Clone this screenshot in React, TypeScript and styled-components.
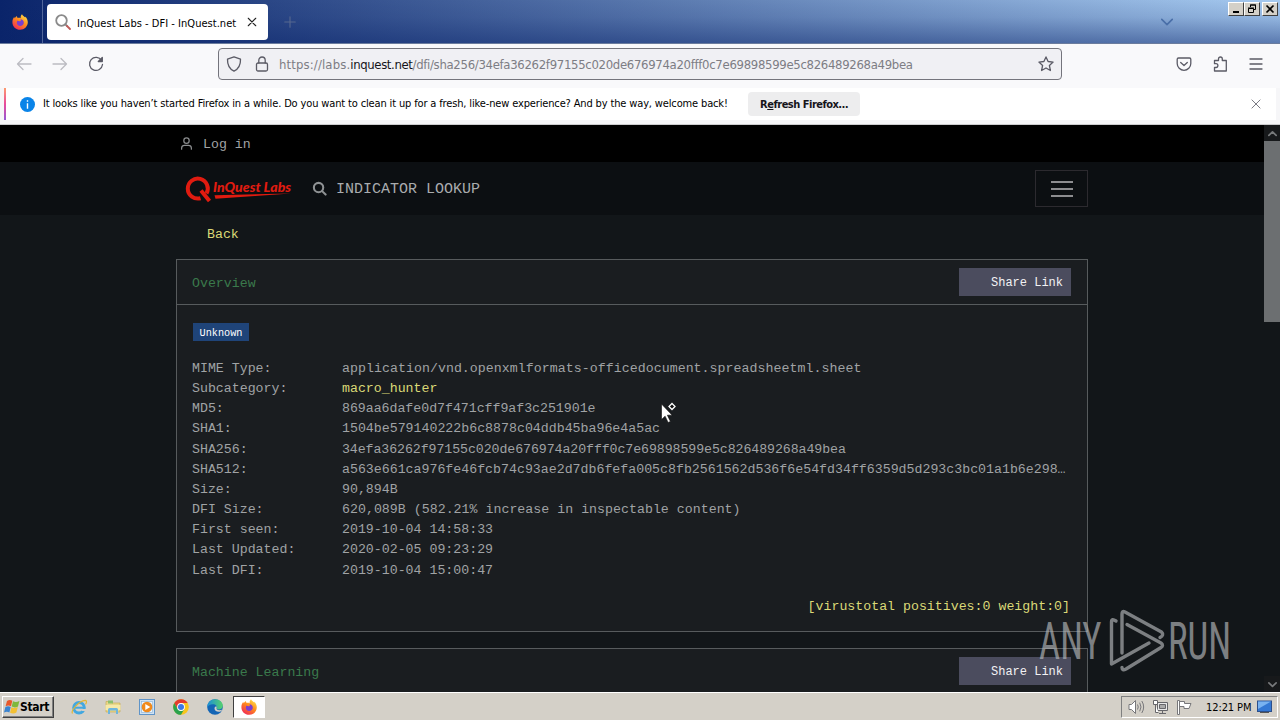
import { ReactNode } from 'react';
import styled, { createGlobalStyle, css } from 'styled-components';

const GlobalStyle = createGlobalStyle`
  * {
    box-sizing: border-box;
  }

  body {
    margin: 0;
    overflow: hidden;
  }
`;

const ui = `'DejaVu Sans Condensed', 'DejaVu Sans', sans-serif`;
const mono = `'Liberation Mono', monospace`;

const Screen = styled.div`
  position: relative;
  display: flex;
  flex-direction: column;
  width: 1280px;
  height: 720px;
  overflow: hidden;
  font-family: ${ui};
  font-stretch: condensed;
  font-size: 11px;
  color: #15141a;

  svg {
    display: block;
    flex: none;
  }
`;

/* ---------- browser chrome ---------- */

const TitleBar = styled.div`
  display: flex;
  height: 44px;
  flex: none;
  border-bottom: 1px solid #6b7c9d;
  background: linear-gradient(180deg, rgba(255, 255, 255, 0) 0, rgba(10, 36, 106, 0.12) 40%, rgba(10, 36, 106, 0.48) 100%),
    linear-gradient(90deg, #0a246a 0, #a6caf0 100%);
`;

const PinnedArea = styled.div`
  display: flex;
  align-items: center;
  justify-content: center;
  width: 43px;
  padding-right: 3px;
  border-right: 1px solid #51669b;
`;

const Tab = styled.div`
  display: flex;
  align-items: center;
  width: 221px;
  height: 36px;
  margin: 4px 0 0 4px;
  padding: 0 11px 0 8px;
  border-radius: 4px;
  background: #fff;
`;

const TabTitle = styled.span`
  width: 162px;
  margin: 3px 9px 0 6px;
  color: #000;
  letter-spacing: 0.03px;
  white-space: nowrap;
`;

const NewTab = styled.div`
  display: flex;
  align-items: center;
  margin-left: 16px;
  flex: 1;
`;

const ListTabs = styled.div`
  display: flex;
  align-items: center;
  margin-right: 55px;
`;

const WindowButtons = styled.div`
  display: flex;
  padding: 2px 2px 0 0;
`;

const WindowButton = styled.div<{ $gap?: boolean }>`
  display: flex;
  align-items: center;
  justify-content: center;
  width: 16px;
  height: 14px;
  margin-left: ${(p) => (p.$gap ? 2 : 0)}px;
  border: 1px solid;
  border-color: #fff #404040 #404040 #fff;
  background: #d4d0c8;
`;

const NavBar = styled.div`
  display: flex;
  align-items: center;
  height: 44px;
  flex: none;
  padding: 0 15px 4px 16px;
  background: #f9f9fb;
`;

const NavIcons = styled.div<{ $gap: number }>`
  display: flex;
  align-items: center;
  gap: ${(p) => p.$gap}px;
`;

const UrlBar = styled.div`
  display: flex;
  align-items: center;
  width: 844px;
  height: 32px;
  margin: 0 114px 0 114px;
  padding: 0 7px;
  border: 1px solid #74747c;
  border-radius: 4px;
  background: #f0f0f4;
`;

const Url = styled.span`
  flex: 1;
  margin: 1px 0 0 9px;
  font-size: 13px;
  letter-spacing: -0.31px;
  color: #7d7d84;
  white-space: nowrap;
`;

const UrlScheme = styled.span`
  letter-spacing: 0.13px;
`;

const UrlHost = styled.span`
  letter-spacing: -0.37px;
  color: #15141a;
`;

const NoticeArea = styled.div`
  height: 37px;
  flex: none;
  padding: 0 4px 4px 4px;
  border-bottom: 1px solid #ccccce;
  background: #f6f6f8;
`;

const Notice = styled.div`
  display: flex;
  align-items: center;
  height: 32px;
  padding: 0 15px 0 14px;
  border-left: 2px solid;
  border-image: linear-gradient(180deg, #ffa06c, #e84a9a 50%, #9059d8) 1;
  background: #fff;
`;

const NoticeText = styled.span`
  width: 705px;
  margin: 0 0 2px 8px;
  color: #000;
  letter-spacing: -0.143px;
  white-space: nowrap;
`;

const NoticeButton = styled.div`
  width: 112px;
  height: 24px;
  border-radius: 4px;
  background: #ededee;
  font-weight: 700;
  line-height: 25px;
  letter-spacing: -0.5px;
  text-align: center;
  white-space: nowrap;
`;

const Spacer = styled.div`
  flex: 1;
`;

/* ---------- page ---------- */

const Viewport = styled.div`
  display: flex;
  height: 567px;
  flex: none;
  overflow: hidden;
  background: #121619;
`;

const Page = styled.div`
  width: 1264px;
  font-family: ${mono};
  font-size: 13.25px;
  color: #a0a3a5;
`;

const Container = styled.div`
  width: 912px;
  margin: 0 auto;
`;

const LoginBar = styled.div`
  height: 37px;
  background: #000;
`;

const LoginLink = styled.div`
  display: flex;
  align-items: center;
  gap: 10px;
  height: 37px;
  padding-left: 4px;
  line-height: 17px;

  span {
    padding-top: 2px;
  }
`;

const SiteNav = styled.div`
  height: 53px;
  background: #0c0f12;
`;

const SiteNavRow = styled(Container)`
  display: flex;
  align-items: center;
  height: 53px;
  padding-left: 9px;
`;

const Lookup = styled.div`
  display: flex;
  align-items: center;
  flex: 1;
  gap: 9px;
  margin-left: 20px;
  font-size: 15px;
  color: #a9acae;

  span {
    padding-top: 2px;
  }
`;

const MenuButton = styled.div`
  display: flex;
  align-items: center;
  justify-content: center;
  width: 53px;
  height: 37px;
  border: 1px solid #2c2a2f;
`;

const Back = styled.div`
  height: 44px;
  padding: 11px 0 0 31px;
  line-height: 18px;
  color: #dbd977;
`;

const Card = styled.section`
  margin-bottom: 16px;
  border: 1px solid #575b5d;
  background: #1a1d20;
`;

const CardHeader = styled.header`
  display: flex;
  align-items: center;
  justify-content: space-between;
  height: 45px;
  padding: 0 16px 0 15px;
  border-bottom: 1px solid #575b5d;
`;

const CardTitle = styled.span`
  padding-top: 3px;
  color: #3a7a4c;
`;

const ShareButton = styled.div`
  width: 112px;
  height: 28px;
  padding-right: 8px;
  background: #4b4c5e;
  font-size: 12px;
  line-height: 30px;
  text-align: right;
  color: #f2f2f4;
`;

const CardBody = styled.div`
  height: 326px;
  padding: 18px 17px 0 16px;
`;

const Badge = styled.div`
  width: 56px;
  height: 18px;
  background: #1f4479;
  font-size: 10.2px;
  line-height: 21px;
  text-align: center;
  color: #fff;
`;

const Facts = styled.dl`
  display: grid;
  grid-template-columns: 150px 1fr;
  grid-auto-rows: 20.17px;
  margin: 17px 0 0 -1px;
  line-height: 21px;
`;

const Term = styled.dt`
  white-space: nowrap;
`;

const Value = styled.dd<{ $link?: boolean; $spacing?: number }>`
  margin: 0;
  letter-spacing: ${(p) => p.$spacing ?? 0}px;
  white-space: nowrap;
  ${(p) =>
    p.$link &&
    css`
      color: #dbd977;
    `}
`;

const VirusTotal = styled.div`
  margin-top: 17px;
  line-height: 20px;
  text-align: right;
  color: #dbd977;
`;

const ScrollTrack = styled.div`
  display: flex;
  flex-direction: column;
  align-items: center;
  justify-content: space-between;
  width: 16px;
  background: #121619;
`;

const ScrollThumb = styled.div`
  width: 16px;
  height: 181px;
  margin-bottom: auto;
  background: #6c6f71;
`;

const ScrollArrow = styled.div`
  display: flex;
  align-items: center;
  justify-content: center;
  width: 16px;
  height: 16px;
  background: #17191b;
`;

/* ---------- taskbar ---------- */

const Taskbar = styled.div`
  display: flex;
  align-items: center;
  height: 28px;
  padding: 1px 2px 1px 2px;
  border-top: 1px solid #fff;
  background: #d4d0c8;
`;

const StartButton = styled.div`
  display: flex;
  align-items: center;
  width: 52px;
  height: 22px;
  padding-left: 1px;
  border: 1px solid;
  border-color: #fff #404040 #404040 #fff;
  box-shadow: inset -1px -1px 0 #808080;
  font-size: 12px;
  font-weight: 700;
  letter-spacing: -0.35px;
  color: #000;
`;

const QuickLaunch = styled.div`
  display: flex;
  align-items: center;
  gap: 18px;
  margin: 0 10px 0 17px;
`;

const ActiveTask = styled.div`
  display: flex;
  align-items: center;
  justify-content: center;
  width: 32px;
  height: 22px;
  border: 1px solid;
  border-color: #404040 #fff #fff #404040;
  background: #fff;
`;

const Tray = styled.div`
  display: flex;
  align-items: center;
  gap: 7px;
  width: 157px;
  height: 22px;
  padding-left: 6px;
  border: 1px solid;
  border-color: #808080 #fff #fff #808080;
`;

const Clock = styled.span`
  width: 44px;
  margin: 1px 0 0 6px;
  color: #000;
  letter-spacing: -0.1px;
  white-space: nowrap;
`;

/* ---------- overlays ---------- */

const Cursor = styled.svg`
  position: absolute;
  left: 661px;
  top: 401px;
`;

const Watermark = styled.svg`
  position: absolute;
  left: 1036px;
  top: 606px;
  overflow: visible;
  opacity: 0.65;
`;

const Line = ({
  size = 16,
  color = '#5b5b66',
  width = 1.3,
  children,
}: {
  size?: number;
  color?: string;
  width?: number;
  children: ReactNode;
}) => (
  <svg
    width={size}
    height={size}
    viewBox="0 0 16 16"
    fill="none"
    stroke={color}
    strokeWidth={width}
    strokeLinecap="round"
    strokeLinejoin="round"
  >
    {children}
  </svg>
);

const Firefox = ({ size = 16 }: { size?: number }) => (
  <svg width={size} height={size} viewBox="0 0 16 16">
    <defs>
      <linearGradient id="fx" x1="0.85" y1="0.05" x2="0.2" y2="1">
        <stop offset="0" stopColor="#ffe14a" />
        <stop offset="0.45" stopColor="#ff8a1c" />
        <stop offset="1" stopColor="#f0245a" />
      </linearGradient>
    </defs>
    <path
      d="M10 0.2c0.6 1.6 2.2 2 3.2 3.4 0.2-0.4 0.1-0.9 0-1.2C14.9 4 15.9 6.2 15.8 8.6 15.6 12.7 12.3 15.8 8.2 15.8 3.8 15.8 0.4 12.5 0.4 8.2c0-2.1 0.7-4 1.9-5.4 0 0.7 0.1 1.1 0.4 1.5C3.3 3.2 4 2.6 4.9 2.1c0 0.8 0.3 1.3 0.8 1.8C7.1 3.7 8 3.8 8.7 4.2 8.4 2.5 9 1.2 10 0.2z"
      fill="url(#fx)"
    />
    <path
      d="M8.4 5.3c2 0 3.4 1.5 3.4 3.3 0 2-1.6 3.4-3.6 3.4S4.8 10.5 4.8 8.7c0-0.8 0.3-1.5 0.8-2.1 0.6 0.7 1.4 0.7 2.5 0.7 0.6 0 1.1-0.7 0.3-2z"
      fill="#7a3fd0"
    />
  </svg>
);

const StartFlag = () => (
  <svg width="16" height="16" viewBox="0 0 16 16">
    <path d="M3 2C5 0.500 6.800 0.800 8.300 1.800L7 7.300C5.200 6.200 3.500 6.200 1.600 7.300z" fill="#e8582a" />
    <path d="M9 2.300c2 1 3.900 1 6.400-0.300L14 7.500c-2 1.200-4.200 1.200-6.300 0.100z" fill="#7fb83c" />
    <path d="M1.400 8c1.800-1 3.600-1 5.300 0L5.400 13.500C3.700 12.400 2 12.400 0 13.500z" fill="#3b84d0" />
    <path d="M7.400 8.300c2 1 4.200 1 6.400-0.200L12.400 13.600c-2 1.300-4.200 1.300-6.300 0.200z" fill="#f3c033" />
  </svg>
);

const Explorer = () => (
  <svg width="16" height="16" viewBox="0 0 16 16">
    <circle cx="8" cy="8.700" r="5.300" fill="none" stroke="#43a8e0" strokeWidth="3" />
    <path d="M4 8.700h9.500" stroke="#43a8e0" strokeWidth="2" />
    <path d="M10.500 9.900h5v2h-4.500z" fill="#d4d0c8" />
    <path d="M1.500 14.500C-0.500 11.500 8 2 14.200 1.400c2 0.100 1.300 2.600 0.300 4" fill="none" stroke="#e2b634" strokeWidth="1.200" />
  </svg>
);

const Folder = () => (
  <svg width="16" height="16" viewBox="0 0 16 16">
    <path d="M1 2.500h5l1 1.500h8v9H1z" fill="#ead78b" stroke="#c8a848" strokeWidth="0.600" />
    <path d="M3 1.500h5v3H3z" fill="#8cbf6c" />
    <path d="M0.500 6h15v5h-15z" fill="#f6e9a8" />
    <path d="M3 15V10.500q0-1.500 1.500-1.500h7q1.500 0 1.500 1.500V15h-2v-3.500H5V15z" fill="#6fb6dd" />
  </svg>
);

const MediaPlayer = () => (
  <svg width="16" height="16" viewBox="0 0 16 16">
    <rect x="0.500" y="0.500" width="15" height="15" fill="#cfe2f3" stroke="#5f94c8" />
    <rect x="2.500" y="2.500" width="11" height="11" fill="#e9f2fa" stroke="#86afd6" strokeWidth="0.600" />
    <circle cx="8" cy="8" r="5.300" fill="#f08a1c" />
    <path d="M6.300 4.900v6.200L11.300 8z" fill="#fff" />
  </svg>
);

const Chrome = () => (
  <svg width="16" height="16" viewBox="0 0 16 16">
    <circle cx="8" cy="8" r="7.800" fill="#f8c51b" />
    <path d="M1.240 4.100A7.800 7.800 0 0 1 14.760 4.100H8L4.600 10z" fill="#e33b2e" />
    <path d="M1.240 4.100A7.800 7.800 0 0 0 8 15.800L11.400 10 8 11.900 4.600 10z" fill="#2ba24c" />
    <circle cx="8" cy="8" r="3.900" fill="#fff" />
    <circle cx="8" cy="8" r="3" fill="#3c79e6" />
  </svg>
);

const Edge = () => (
  <svg width="16" height="16" viewBox="0 0 16 16">
    <defs>
      <linearGradient id="edge" x1="0" y1="0.3" x2="1" y2="0.3">
        <stop offset="0" stopColor="#1c8fd8" />
        <stop offset="1" stopColor="#56d26c" />
      </linearGradient>
    </defs>
    <circle cx="8" cy="8" r="7.800" fill="#1465b5" />
    <path
      d="M0.300 8.500C0 3.500 4 0.200 8.200 0.200c4.500 0 7.600 3.200 7.600 6.300 0 2.500-2 3.900-4 3.900-1.600 0-2.600-0.600-2.200-1.400C10.300 7.500 8.800 5.300 6 5.300 3 5.300 0.800 7 0.300 8.500z"
      fill="url(#edge)"
    />
    <path
      d="M9.600 9c-0.600 1.200 0.700 2.200 2.800 2.200 1.300 0 2.200-0.300 3-0.700-0.800 1.400-2 2.300-3.400 2.300C9 12.800 7.300 11 7.500 9.200 7.600 8 8.500 7.400 9.600 7.600z"
      fill="#d4d0c8"
    />
  </svg>
);

const Logo = () => (
  <svg width="107" height="28" viewBox="0 0 107 28">
    <path d="M15.500 23.200A10 10 0 1 1 21.500 18.500" fill="none" stroke="#e01b10" strokeWidth="4" />
    <path d="M16 15.500l8.500 10.500" stroke="#e01b10" strokeWidth="4" />
    <text
      x="28"
      y="17"
      textLength="78"
      lengthAdjust="spacingAndGlyphs"
      fontFamily="Lato, sans-serif"
      fontStyle="italic"
      fontWeight="900"
      fontSize="12.500"
      fill="#e01b10"
    >
      InQuest Labs
    </text>
    <path d="M29.500 20.200L106 18.600 70 21 30.500 23.800z" fill="#e01b10" />
  </svg>
);

const facts: { term: string; value: string; link?: boolean; spacing?: number }[] = [
  {
    term: 'MIME Type:',
    value: 'application/vnd.openxmlformats-officedocument.spreadsheetml.sheet',
    spacing: 0.04,
  },
  { term: 'Subcategory:', value: 'macro_hunter', link: true },
  { term: 'MD5:', value: '869aa6dafe0d7f471cff9af3c251901e', spacing: -0.03 },
  { term: 'SHA1:', value: '1504be579140222b6c8878c04ddb45ba96e4a5ac' },
  {
    term: 'SHA256:',
    value: '34efa36262f97155c020de676974a20fff0c7e69898599e5c826489268a49bea',
    spacing: -0.08,
  },
  {
    term: 'SHA512:',
    value: 'a563e661ca976fe46fcb74c93ae2d7db6fefa005c8fb2561562d536f6e54fd34ff6359d5d293c3bc01a1b6e298…',
  },
  { term: 'Size:', value: '90,894B' },
  { term: 'DFI Size:', value: '620,089B (582.21% increase in inspectable content)', spacing: 0.02 },
  { term: 'First seen:', value: '2019-10-04 14:58:33' },
  { term: 'Last Updated:', value: '2020-02-05 09:23:29' },
  { term: 'Last DFI:', value: '2019-10-04 15:00:47' },
];

const Browser = () => (
  <>
    <TitleBar>
      <PinnedArea>
        <Firefox />
      </PinnedArea>
      <Tab>
        <Line color="#8a8a8a" width={1.8}>
          <circle cx="6.500" cy="6.500" r="5.300" />
          <path d="M10.500 10.500l1.500 1.500" />
          <path d="M12 12l3 3" stroke="#c05a58" />
        </Line>
        <TabTitle>InQuest Labs - DFI - InQuest.net</TabTitle>
        <Line size={10} color="#222" width={1.7}>
          <path d="M2 2l12 12M14 2L2 14" />
        </Line>
      </Tab>
      <NewTab>
        <Line size={12} color="#56688f" width={1.5}>
          <path d="M8 1v14M1 8h14" />
        </Line>
      </NewTab>
      <ListTabs>
        <Line size={12} color="#4a6fa8" width={2.2}>
          <path d="M1 4.500l7 7 7-7" />
        </Line>
      </ListTabs>
      <WindowButtons>
        <WindowButton>
          <svg width="12" height="10" viewBox="0 0 12 10">
            <path d="M3 7h6v2H3z" />
          </svg>
        </WindowButton>
        <WindowButton>
          <svg width="12" height="10" viewBox="0 0 12 10" fill="none" stroke="#000">
            <path d="M4.500 3V1h5v4.500H8M4 1h6" />
            <path d="M2.500 4.500h5v4h-5zM2 4h6" />
          </svg>
        </WindowButton>
        <WindowButton $gap>
          <svg width="12" height="10" viewBox="0 0 12 10" stroke="#000" strokeWidth="1.700">
            <path d="M2.500 1.500l7 7M9.500 1.500l-7 7" />
          </svg>
        </WindowButton>
      </WindowButtons>
    </TitleBar>

    <NavBar>
      <NavIcons $gap={20}>
        <Line color="#bcbcc2">
          <path d="M15 8H1.500M7 2.500L1.500 8 7 13.500" />
        </Line>
        <Line color="#bcbcc2">
          <path d="M1 8h13.500M9 2.500L14.500 8 9 13.500" />
        </Line>
        <Line>
          <path d="M13.600 4.500A6.500 6.500 0 1 0 14.500 8.500" />
          <path d="M14.300 1.500v4h-4z" fill="#5b5b66" />
        </Line>
      </NavIcons>
      <UrlBar>
        <NavIcons $gap={12}>
          <Line>
            <path d="M8 0.800l6.500 2.400c0.200 5.300-1.500 9.400-6.500 12C3 12.600 1.300 8.500 1.500 3.200z" />
          </Line>
          <Line>
            <rect x="2.500" y="7" width="11" height="8" rx="1.500" />
            <path d="M4.800 7V4.200a3.200 3.200 0 0 1 6.400 0V7" />
          </Line>
        </NavIcons>
        <Url>
          <UrlScheme>https://labs.</UrlScheme>
          <UrlHost>inquest.net</UrlHost>
          /dfi/sha256/34efa36262f97155c020de676974a20fff0c7e69898599e5c826489268a49bea
        </Url>
        <Line>
          <path d="M8 0.900l2.100 4.600 5 0.600-3.700 3.400 1 5L8 12l-4.400 2.500 1-5L0.900 6.100l5-0.600z" />
        </Line>
      </UrlBar>
      <NavIcons $gap={20}>
        <Line>
          <path d="M2.500 2h11q1.300 0 1.300 1.300v4.200a6.800 6.800 0 0 1-13.600 0V3.300Q1.200 2 2.500 2z" />
          <path d="M4.700 6.500L8 9.500l3.300-3" />
        </Line>
        <Line>
          <path d="M2.500 15V11.500h1.500a1.900 1.900 0 0 0 0-3.800H2.500V4.500h4V2.900a1.900 1.900 0 0 1 3.800 0v1.600h4V15z" />
        </Line>
        <Line>
          <path d="M2 3h12M2 8h12M2 13h12" />
        </Line>
      </NavIcons>
    </NavBar>

    <NoticeArea>
      <Notice>
        <svg width="15" height="15" viewBox="0 0 15 15">
          <circle cx="7.500" cy="7.500" r="7.500" fill="#0a84e8" />
          <path d="M7.500 3.200v1.600M7.500 6.200v5.500" stroke="#fff" strokeWidth="1.400" />
        </svg>
        <NoticeText>
          It looks like you haven’t started Firefox in a while. Do you want to clean it up for a fresh, like-new
          experience? And by the way, welcome back!
        </NoticeText>
        <NoticeButton>
          R<u>e</u>fresh Firefox…
        </NoticeButton>
        <Spacer />
        <Line size={10}>
          <path d="M1.500 1.500l13 13M14.500 1.500l-13 13" />
        </Line>
      </Notice>
    </NoticeArea>
  </>
);

const InQuestPage = () => (
  <Viewport>
    <Page>
      <LoginBar>
        <Container>
          <LoginLink>
            <Line size={13} color="#8b8d8f" width={1.5}>
              <circle cx="8" cy="4.500" r="3.300" />
              <path d="M2 15v-1.500a3.500 3.500 0 0 1 3.500-3.300h5a3.500 3.500 0 0 1 3.500 3.300V15" />
            </Line>
            <span>Log in</span>
          </LoginLink>
        </Container>
      </LoginBar>
      <SiteNav>
        <SiteNavRow>
          <Logo />
          <Lookup>
            <Line size={15} color="#8f9294" width={2.2}>
              <circle cx="7" cy="7" r="5" />
              <path d="M10.800 10.800l3.700 3.700" />
            </Line>
            <span>INDICATOR LOOKUP</span>
          </Lookup>
          <MenuButton>
            <svg width="22" height="18" viewBox="0 0 22 18">
              <path d="M0 2h22M0 9h22M0 16h22" stroke="#8d8d90" strokeWidth="2" />
            </svg>
          </MenuButton>
        </SiteNavRow>
      </SiteNav>
      <Container>
        <Back>Back</Back>
        <Card>
          <CardHeader>
            <CardTitle>Overview</CardTitle>
            <ShareButton>Share Link</ShareButton>
          </CardHeader>
          <CardBody>
            <Badge>Unknown</Badge>
            <Facts>
              {facts.map(({ term, value, link, spacing }) => [
                <Term key={term}>{term}</Term>,
                <Value key={`${term}-value`} $link={link} $spacing={spacing}>
                  {value}
                </Value>,
              ])}
            </Facts>
            <VirusTotal>[virustotal positives:0 weight:0]</VirusTotal>
          </CardBody>
        </Card>
        <Card>
          <CardHeader>
            <CardTitle>Machine Learning</CardTitle>
            <ShareButton>Share Link</ShareButton>
          </CardHeader>
        </Card>
      </Container>
    </Page>
    <ScrollTrack>
      <ScrollArrow>
        <Line size={9} color="#77797b" width={3}>
          <path d="M1.500 11.500L8 5l6.500 6.500" />
        </Line>
      </ScrollArrow>
      <ScrollThumb />
      <ScrollArrow>
        <Line size={9} color="#77797b" width={3}>
          <path d="M1.500 5L8 11.500 14.500 5" />
        </Line>
      </ScrollArrow>
    </ScrollTrack>
  </Viewport>
);

const Desktop = () => (
  <Taskbar>
    <StartButton>
      <StartFlag />
      Start
    </StartButton>
    <QuickLaunch>
      <Explorer />
      <Folder />
      <MediaPlayer />
      <Chrome />
      <Edge />
    </QuickLaunch>
    <ActiveTask>
      <Firefox />
    </ActiveTask>
    <Spacer />
    <Tray>
      <svg width="17" height="16" viewBox="0 0 17 16" fill="none" stroke="#77777a">
        <path d="M1 5.500h2.500L7.500 1.500v13l-4-4H1z" fill="#fff" />
        <path d="M9.500 5.500q1.500 2.500 0 5M11.700 3.700q2.600 4.300 0 8.600M13.800 2q3.700 6 0 12" />
      </svg>
      <svg width="17" height="16" viewBox="0 0 17 16" fill="none" stroke="#66666a">
        <path d="M5.500 3.500h10v8h-10zM7 14.500h7M10.500 11.500v3" fill="#e8e8e8" />
        <path d="M7.500 5.500h6v4h-6z" fill="#aaa" />
        <path d="M1.500 1.500h4v4h-4zM3.500 5.500v8h3" fill="#fff" />
      </svg>
      <svg width="17" height="16" viewBox="0 0 17 16" fill="#fff" stroke="#77777a">
        <path d="M1.500 1.500h2v14h-2zM3.500 2.500h5v2h6.500l-2 5h-5v-2h-4.500z" />
      </svg>
      <Clock>12:21 PM</Clock>
      <svg width="15" height="14" viewBox="0 0 15 14">
        <rect x="0.500" y="1" width="14" height="10.500" fill="#3478d4" stroke="#2a4f8c" />
        <path d="M1 1.500h13L1 9z" fill="#79b2f0" />
        <path d="M3 12.500h9" stroke="#555" />
      </svg>
    </Tray>
  </Taskbar>
);

const App = () => (
  <Screen>
    <GlobalStyle />
    <Browser />
    <InQuestPage />
    <Desktop />
    <Cursor width="24" height="24" viewBox="0 0 24 24">
      <path d="M0.500 3v15.500l3.600-3.300 3 6.300 2.300-1.100-3-6.200h4.800z" fill="#fff" stroke="#111" strokeWidth="0.600" />
      <path d="M11 2.500L14 5.500 11 8.500 8 5.500z" fill="#111" stroke="#fff" strokeWidth="1.300" />
    </Cursor>
    <Watermark width="200" height="70" viewBox="0 0 200 70">
      <g fill="#b5b8ba" fontFamily="Roboto, sans-serif" fontSize="52">
        <text transform="translate(3 53) scale(0.705 1)">ANY</text>
        <text transform="translate(132 53) scale(0.71 1)">RUN</text>
      </g>
      <g fill="none" stroke="#b5b8ba" strokeWidth="3.400" strokeLinecap="round" strokeLinejoin="round">
        <path d="M80 15q-4.500-3-4.500 1v42L113 37" />
        <path d="M86 47V8q0-3.500 3-2l36.500 20q3 3-1.500 5.500" />
        <path d="M91 18.500L125 37q3 2 0 4.500L90 63q-4 2-4-1.500" />
      </g>
    </Watermark>
  </Screen>
);

export default App;
